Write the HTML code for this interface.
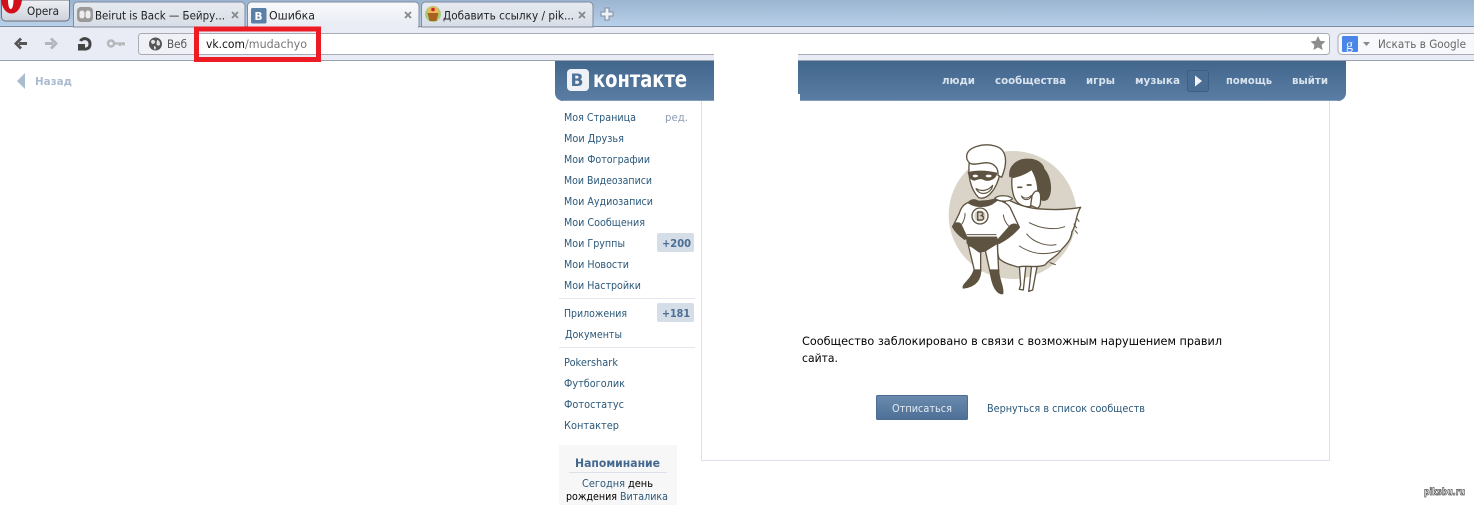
<!DOCTYPE html>
<html><head><meta charset="utf-8"><title>Ошибка</title>
<style>
html,body{margin:0;padding:0;background:#fff;width:1474px;height:505px;overflow:hidden}
svg{display:block}
text{font-family:"DejaVu Sans","Liberation Sans",sans-serif;font-size:10.5px;fill:#2b587a}
.ui{font-size:11.5px;fill:#222}
.b{font-weight:bold}
</style></head><body>
<svg width="1474" height="505" viewBox="0 0 1474 505" xmlns="http://www.w3.org/2000/svg">
<defs>
<linearGradient id="top" x1="0" y1="0" x2="0" y2="1"><stop offset="0" stop-color="#9bb4d0"/><stop offset="1" stop-color="#b9d1ea"/></linearGradient>
<linearGradient id="tab" x1="0" y1="0" x2="0" y2="1"><stop offset="0" stop-color="#e6eaf0"/><stop offset="1" stop-color="#d8dee7"/></linearGradient>
<linearGradient id="atab" x1="0" y1="0" x2="0" y2="1"><stop offset="0" stop-color="#f8f9fb"/><stop offset="1" stop-color="#e9ecf4"/></linearGradient>
<linearGradient id="op" x1="0" y1="0" x2="0" y2="1"><stop offset="0" stop-color="#eef0f4"/><stop offset="1" stop-color="#cdd2dc"/></linearGradient>
<linearGradient id="hd" x1="0" y1="0" x2="0" y2="1"><stop offset="0" stop-color="#41668c"/><stop offset="1" stop-color="#5b7da4"/></linearGradient>
<linearGradient id="btn" x1="0" y1="0" x2="0" y2="1"><stop offset="0" stop-color="#6a8aad"/><stop offset="1" stop-color="#4e7097"/></linearGradient>
</defs>

<!-- tab strip -->
<rect width="1474" height="27" fill="url(#top)"/>
<rect y="26" width="1474" height="1" fill="#7f8ba0"/>
<rect y="27" width="1474" height="33" fill="#e9ecf4"/>
<rect y="60" width="1474" height="1" fill="#9aa2b0"/>

<!-- opera button -->
<path d="M1.500 0H69.500V17a4 4 0 0 1-4 4H5.500a4 4 0 0 1-4-4Z" fill="url(#op)" stroke="#6b6f78"/>
<path d="M1 0H22C21 8 17 13.500 11.500 13.500C6 13.500 2 8 1 0Z" fill="#d2101c"/>
<path d="M8 0H13.500C13.500 5 12.500 9 10.700 9C9 9 8 5 8 0Z" fill="#fff"/>
<text class="ui" x="27" y="15" textLength="32" lengthAdjust="spacingAndGlyphs">Opera</text>

<!-- tabs -->
<path d="M73.500 27V6a4 4 0 0 1 4-4H241a4 4 0 0 1 4 4V27Z" fill="url(#tab)" stroke="#7f8ba0"/>
<rect x="77" y="7" width="16" height="15" rx="4" fill="#9a9a9a"/>
<rect x="79.500" y="10.500" width="5" height="8" rx="2.500" fill="#eee"/><rect x="85.500" y="10.500" width="5" height="8" rx="2.500" fill="#eee"/>
<text class="ui" x="95" y="19.500" textLength="130" lengthAdjust="spacingAndGlyphs">Beirut is Back — Бейру...</text>
<path d="M232 12l6 6M238 12l-6 6" stroke="#888" stroke-width="1.800"/>

<path d="M247.500 27V6a4 4 0 0 1 4-4H415a4 4 0 0 1 4 4V27Z" fill="url(#atab)" stroke="#7f8ba0"/>
<rect x="248" y="25" width="170" height="3" fill="#e9ecf4"/>
<rect x="251" y="8" width="15.500" height="15.500" rx="1.500" fill="#5a80a8"/>
<text class="b" x="254.500" y="20" style="font-size:10.500px;fill:#fff">В</text>
<text class="ui" x="269" y="19.500" textLength="46" lengthAdjust="spacingAndGlyphs">Ошибка</text>
<path d="M405 12l6 6M411 12l-6 6" stroke="#888" stroke-width="1.800"/>

<path d="M421.500 27V6a4 4 0 0 1 4-4H589a4 4 0 0 1 4 4V27Z" fill="url(#tab)" stroke="#7f8ba0"/>
<circle cx="433" cy="14" r="8" fill="#a9cc7c"/>
<path d="M427 13c0-4 3-6.500 6-6.500s6 2.500 6 6.500Z" fill="#e8b85a"/>
<path d="M427.500 13h11l-2 8h-7Z" fill="#a8641e"/>
<circle cx="433" cy="9.500" r="1.800" fill="#c22"/>
<text class="ui" x="443" y="19.500" textLength="131" lengthAdjust="spacingAndGlyphs">Добавить ссылку / pik...</text>
<path d="M579 12l6 6M585 12l-6 6" stroke="#888" stroke-width="1.800"/>
<path d="M605 8h4v4h4v4h-4v4h-4v-4h-4v-4h4Z" fill="#eef2f7" stroke="#7f8ba0"/>

<!-- toolbar icons -->
<path d="M27 43.500H19" stroke="#555" stroke-width="3" fill="none"/>
<path d="M20 37.500L14 43.500L20 49.500L22 47.500L18 43.500L22 39.500Z" fill="#555"/>
<path d="M45 43.500H53" stroke="#b2b5bb" stroke-width="3" fill="none"/>
<path d="M52 37.500L58 43.500L52 49.500L50 47.500L54 43.500L50 39.500Z" fill="#b2b5bb"/>
<path d="M80.500 41C82 37.500 90 37.500 90 44C90 50 83 50 81.500 47.500" fill="none" stroke="#444" stroke-width="3"/>
<path d="M78 44H85V50.500H78Z" fill="#444"/>
<circle cx="111" cy="43.500" r="3" fill="none" stroke="#b4b6ba" stroke-width="2.400"/>
<path d="M114 43.500h11M120 43.500v2.500M123.500 43.500v2" stroke="#b4b6ba" stroke-width="2.200" fill="none"/>

<!-- address field -->
<rect x="138.500" y="33.500" width="1191" height="21" rx="3" fill="#fff" stroke="#a9acb4"/>
<rect x="139" y="34" width="55" height="20" rx="3" fill="#eff1f6"/>
<circle cx="155.500" cy="44" r="6.500" fill="#565656"/>
<path d="M151 41c2-2 3-1 4 0s-1 3-2 3-2-1-2-3ZM157 40c2 0 3 2 3 4s-2 2-3 1 0-3 0-5ZM154 46c1 0 2 1 2 2l-1 2c-1-1-1-2-1-4Z" fill="#e3e3e3"/>
<text class="ui" x="167" y="48" textLength="20" lengthAdjust="spacingAndGlyphs" style="fill:#555">Веб</text>
<text class="ui" x="206" y="48" textLength="39" lengthAdjust="spacingAndGlyphs" style="fill:#111">vk.com</text>
<text class="ui" x="245" y="48" textLength="62" lengthAdjust="spacingAndGlyphs" style="fill:#777">/mudachyo</text>
<path d="M1318 36l2.200 4.800 5.300.6-3.900 3.500 1 5.100-4.600-2.600-4.600 2.600 1-5.100-3.900-3.500 5.300-.6Z" fill="#8d8d8d"/>

<!-- search field -->
<path d="M1474 33.500H1342a4 4 0 0 0-4 4V50.500a4 4 0 0 0 4 4H1474" fill="#f7f8fb" stroke="#a9acb4"/>
<rect x="1342" y="36" width="16" height="16" rx="1" fill="#4a86e8"/>
<text x="1346" y="49" style="font-size:14px;fill:#fff;font-family:'Liberation Serif',serif">g</text>
<path d="M1363 42h7l-3.500 4Z" fill="#888"/>
<text class="ui" x="1378" y="48" textLength="88" lengthAdjust="spacingAndGlyphs" style="fill:#666">Искать в Google</text>

<!-- back link -->
<path d="M25 73V89L17 81Z" fill="#a9bcd0"/>
<text class="b" x="35" y="85" textLength="37" lengthAdjust="spacingAndGlyphs" style="fill:#aabbcf">Назад</text>

<!-- VK header -->
<path d="M555 61H1346V93a8 8 0 0 1-8 8H563a8 8 0 0 1-8-8Z" fill="url(#hd)"/>
<rect x="563" y="100" width="775" height="1" fill="#7f9cbd"/>
<rect x="567" y="69" width="22" height="22" rx="4" fill="#eef1f5"/>
<text class="b" x="570.500" y="86" style="font-size:17px;fill:#4d7198">В</text>
<text class="b" x="593" y="87" textLength="94" lengthAdjust="spacingAndGlyphs" style="font-size:23px;fill:#fff">контакте</text>
<text class="b" x="942" y="84" textLength="33" lengthAdjust="spacingAndGlyphs" style="fill:#d9e3ee">люди</text>
<text class="b" x="995" y="84" textLength="71" lengthAdjust="spacingAndGlyphs" style="fill:#d9e3ee">сообщества</text>
<text class="b" x="1086" y="84" textLength="29" lengthAdjust="spacingAndGlyphs" style="fill:#d9e3ee">игры</text>
<text class="b" x="1135" y="84" textLength="45" lengthAdjust="spacingAndGlyphs" style="fill:#d9e3ee">музыка</text>
<rect x="1187.500" y="70.500" width="21" height="21" rx="2" fill="#4a6d94" stroke="#3d5e85"/>
<path d="M1195 75.500L1202 81L1195 86.500Z" fill="#f2f5f8"/>
<text class="b" x="1226" y="84" textLength="46" lengthAdjust="spacingAndGlyphs" style="fill:#d9e3ee">помощь</text>
<text class="b" x="1292" y="84" textLength="36" lengthAdjust="spacingAndGlyphs" style="fill:#d9e3ee">выйти</text>

<!-- censor box -->
<path d="M714 54H798V94H800V102H714Z" fill="#fff"/>

<!-- content box -->
<path d="M701.500 101V460.500H1329.500V101" fill="none" stroke="#dbe0ea"/>
<rect x="702" y="460" width="628" height="1" fill="#dde1ea"/>

<!-- sidebar -->
<text x="564" y="121" textLength="72" lengthAdjust="spacingAndGlyphs">Моя Страница</text>
<text x="665" y="121" textLength="23" lengthAdjust="spacingAndGlyphs" style="fill:#8a9bb0">ред.</text>
<text x="564" y="142" textLength="60" lengthAdjust="spacingAndGlyphs">Мои Друзья</text>
<text x="564" y="163" textLength="86" lengthAdjust="spacingAndGlyphs">Мои Фотографии</text>
<text x="564" y="184" textLength="88" lengthAdjust="spacingAndGlyphs">Мои Видеозаписи</text>
<text x="564" y="205" textLength="89" lengthAdjust="spacingAndGlyphs">Мои Аудиозаписи</text>
<text x="564" y="226" textLength="81" lengthAdjust="spacingAndGlyphs">Мои Сообщения</text>
<text x="564" y="247" textLength="61" lengthAdjust="spacingAndGlyphs">Мои Группы</text>
<rect x="657" y="233" width="37" height="19" rx="2" fill="#d5dde6"/>
<text class="b" x="662" y="247" textLength="29" lengthAdjust="spacingAndGlyphs" style="fill:#4a6d94">+200</text>
<text x="564" y="268" textLength="65" lengthAdjust="spacingAndGlyphs">Мои Новости</text>
<text x="564" y="289" textLength="77" lengthAdjust="spacingAndGlyphs">Мои Настройки</text>
<rect x="559" y="298" width="136" height="1" fill="#e4e8ee"/>
<text x="564" y="317" textLength="63" lengthAdjust="spacingAndGlyphs">Приложения</text>
<rect x="657" y="303" width="37" height="19" rx="2" fill="#d5dde6"/>
<text class="b" x="662" y="317" textLength="28" lengthAdjust="spacingAndGlyphs" style="fill:#4a6d94">+181</text>
<text x="565" y="338" textLength="57" lengthAdjust="spacingAndGlyphs">Документы</text>
<rect x="559" y="347" width="136" height="1" fill="#e4e8ee"/>
<text x="564" y="366" textLength="54" lengthAdjust="spacingAndGlyphs">Pokershark</text>
<text x="564" y="387" textLength="61" lengthAdjust="spacingAndGlyphs">Футбоголик</text>
<text x="564" y="408" textLength="60" lengthAdjust="spacingAndGlyphs">Фотостатус</text>
<text x="564" y="429" textLength="55" lengthAdjust="spacingAndGlyphs">Контактер</text>

<rect x="559" y="445" width="118" height="60" fill="#f7f7f7"/>
<text class="b" x="575" y="467" textLength="85" lengthAdjust="spacingAndGlyphs" style="font-size:11.500px;fill:#45688e">Напоминание</text>
<rect x="569" y="472" width="98" height="1" fill="#dbe0ea"/>
<text x="582" y="487" textLength="43" lengthAdjust="spacingAndGlyphs">Сегодня</text>
<text x="628" y="487" textLength="25" lengthAdjust="spacingAndGlyphs" style="fill:#000">день</text>
<text x="566" y="500" textLength="51" lengthAdjust="spacingAndGlyphs" style="fill:#000">рождения</text>
<text x="620" y="500" textLength="48" lengthAdjust="spacingAndGlyphs">Виталика</text>

<!-- illustration -->
<g transform="translate(930 130) scale(.3333)" stroke="#5e5340" stroke-width="4" stroke-linejoin="round" stroke-linecap="round" fill="#fff">
<circle cx="248" cy="255" r="192" fill="#d9d4c7" stroke="none"/>
<!-- woman legs -->
<path d="M268 405L272 465L268 478L280 480L288 405Z"/>
<path d="M305 405L298 470L296 484L308 480L322 405Z"/>
<!-- woman hair back -->
<path d="M240 140C235 110 262 86 295 88C320 88 338 100 342 118C362 140 368 185 352 207C340 216 326 208 322 190L300 130Z" fill="#5e5340"/>
<!-- woman face -->
<path d="M246 143C270 138 292 128 305 118C325 150 330 195 315 222C295 238 262 228 252 200C246 182 244 165 246 143Z"/>
<path d="M264 172h11M292 165h11" stroke-width="5" fill="none"/>
<path d="M274 198C284 208 297 205 304 196C302 212 280 214 274 198Z" fill="#fff" stroke-width="3"/>
<path d="M306 198C316 175 332 180 332 200C332 218 332 230 322 235L302 226Z"/>
<!-- cape -->
<path d="M226 205C250 218 280 232 320 236C365 240 410 240 452 232C436 255 440 285 426 305C424 330 408 345 395 358C382 380 360 385 345 405C318 415 292 405 265 411C240 405 218 398 207 385C198 355 200 325 222 290Z"/>
<path d="M298 278C330 295 372 302 404 290M268 348C308 374 350 376 388 362M290 312C310 338 352 350 378 344" fill="none" stroke-width="3"/>
<path d="M432 282l8 12M440 264l7 10M436 302l6 8M360 398l16 6" fill="none" stroke-width="3"/>
<!-- man legs -->
<path d="M115 345L134 425L152 425L152 362Z"/>
<path d="M166 362L180 425L206 425L202 340Z"/>
<!-- boots -->
<path d="M132 420L152 420C152 445 140 470 100 474C96 462 126 448 132 420Z" fill="#5e5340"/>
<path d="M180 420L206 420C204 445 222 470 218 491C200 492 186 468 180 420Z" fill="#5e5340"/>
<!-- torso and arms -->
<path d="M118 216C100 222 92 235 88 250L68 290L106 326L112 322H198L206 338L268 292L240 232C232 220 220 214 200 210Z"/>
<path d="M115 218C126 206 136 208 148 216C165 216 185 208 208 206L186 222C165 232 135 232 115 218Z" fill="#5e5340"/>
<path d="M105 250C106 265 100 275 96 282M220 255C222 270 228 280 236 288" fill="none" stroke-width="3"/>
<!-- gloves -->
<path d="M68 290C74 278 84 276 92 282L112 324L104 328C90 318 76 306 68 290Z" fill="#5e5340"/>
<path d="M268 292C262 282 250 280 242 286L198 336L208 340C230 328 252 312 268 292Z" fill="#5e5340"/>
<!-- belt & briefs -->
<path d="M110 322H200L202 335L166 363L148 366L112 340Z" fill="#5e5340"/>
<path d="M112 314H198" fill="none" stroke-width="3"/>
<!-- emblem -->
<circle cx="150" cy="258" r="24"/>
<circle cx="150" cy="258" r="17" fill="#d9d4c7" stroke="none"/>
<path d="M143 246V270H153C163 270 163 258 153 257C161 256 160 246 152 246Z" fill="none" stroke-width="4.500"/>
<!-- man head -->
<path d="M118 95C114 130 118 175 146 203C172 212 200 178 210 130L195 92Z"/>
<path d="M110 78C112 52 158 38 195 48C228 56 236 92 215 142L204 136C206 112 190 98 168 98C148 100 130 106 120 100C113 94 109 86 110 78Z"/>
<path d="M115 128C135 122 170 122 200 130C196 146 176 156 160 147C150 142 142 148 132 150C122 148 118 140 115 128Z" fill="#5e5340"/>
<ellipse cx="136" cy="138" rx="8" ry="4" stroke="none"/>
<ellipse cx="176" cy="138" rx="9" ry="4" stroke="none"/>
<path d="M138 176C155 186 175 182 188 166C184 192 150 200 138 176Z" stroke-width="3.500"/>
<!-- hand on shoulder -->
<path d="M194 205C204 195 234 194 248 206C236 216 210 216 194 205Z" stroke-width="3.500"/>
</g>

<!-- main text -->
<text x="802" y="345" textLength="420" lengthAdjust="spacingAndGlyphs" style="font-size:11.500px;fill:#000">Сообщество заблокировано в связи с возможным нарушением правил</text>
<text x="802" y="362" textLength="36" lengthAdjust="spacingAndGlyphs" style="font-size:11.500px;fill:#000">сайта.</text>
<rect x="876.500" y="395.500" width="91" height="24" rx="1" fill="url(#btn)" stroke="#4a6d94"/>
<text x="892" y="412" textLength="60" lengthAdjust="spacingAndGlyphs" style="fill:#e4eaf1">Отписаться</text>
<text x="987" y="412" textLength="158" lengthAdjust="spacingAndGlyphs">Вернуться в список сообществ</text>

<!-- red frame -->
<rect x="196.500" y="29" width="122" height="30.500" fill="none" stroke="#ed1c24" stroke-width="5"/>

<!-- watermark -->
<text class="b" x="1424" y="495" textLength="41" lengthAdjust="spacingAndGlyphs" style="font-size:10px;fill:#fff;stroke:#555;stroke-width:.8px">piksbu.ru</text>
</svg>
</body></html>
